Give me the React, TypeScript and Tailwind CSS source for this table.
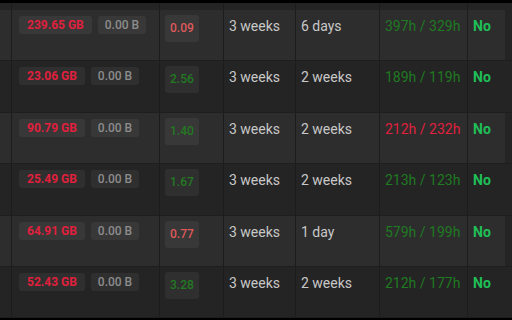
type Row = {
  size: string;
  ratio: string;
  ratioGood: boolean;
  added: string;
  seen: string;
  hours: string;
  hoursGood: boolean;
};

const rows: Row[] = [
  { size: "239.65 GB", ratio: "0.09", ratioGood: false, added: "3 weeks", seen: "6 days", hours: "397h / 329h", hoursGood: true },
  { size: "23.06 GB", ratio: "2.56", ratioGood: true, added: "3 weeks", seen: "2 weeks", hours: "189h / 119h", hoursGood: true },
  { size: "90.79 GB", ratio: "1.40", ratioGood: true, added: "3 weeks", seen: "2 weeks", hours: "212h / 232h", hoursGood: false },
  { size: "25.49 GB", ratio: "1.67", ratioGood: true, added: "3 weeks", seen: "2 weeks", hours: "213h / 123h", hoursGood: true },
  { size: "64.91 GB", ratio: "0.77", ratioGood: false, added: "3 weeks", seen: "1 day", hours: "579h / 199h", hoursGood: true },
  { size: "52.43 GB", ratio: "3.28", ratioGood: true, added: "3 weeks", seen: "2 weeks", hours: "212h / 177h", hoursGood: true },
];

const cols = "grid grid-cols-[12px_148px_64px_72px_84px_88px_37px_1fr]";
const cell = "border-r border-[#1c1c1c]";

const TableRow = ({ row, odd }: { row: Row; odd: boolean }) => (
  <div className={`${cols} h-[51.4px] shrink-0 border-b border-[#1e1e1e]`}>
    <div className={`${cell} ${odd ? "bg-[#2d2d2d]" : "bg-[#242424]"}`} />
    <div className={`${cell} flex items-start gap-[6px] pl-[7px] pt-[6px] ${odd ? "bg-[#2d2d2d]" : "bg-[#242424]"}`}>
      <span className="rounded-[3px] bg-white/[0.05] px-[8px] text-[12px] leading-[18px] font-bold text-[#e0203d]">
        {row.size}
      </span>
      <span className="rounded-[3px] bg-white/[0.05] px-[7px] text-[12px] leading-[18px] font-medium text-[#8c8c8c]">
        0.00 B
      </span>
    </div>
    <div className={`${cell} pl-[5px] pt-[5px] ${odd ? "bg-[#2d2d2d]" : "bg-[#242424]"}`}>
      <span
        className={`inline-block rounded-[3px] bg-white/[0.05] px-[5px] py-[5px] text-[12px] leading-[17px] font-medium ${
          row.ratioGood ? "text-[#237a23]" : "text-[#de5a5a]"
        }`}
      >
        {row.ratio}
      </span>
    </div>
    <div className={`${cell} px-[5px] pt-[6px] text-[14px] leading-5 text-[#c8c8c8] ${odd ? "bg-[#2d2d2d]" : "bg-[#242424]"}`}>
      {row.added}
    </div>
    <div className={`${cell} px-[5px] pt-[6px] text-[14px] leading-5 text-[#c8c8c8] ${odd ? "bg-[#2d2d2d]" : "bg-[#242424]"}`}>
      {row.seen}
    </div>
    <div
      className={`${cell} px-[5px] pt-[6px] text-[14px] leading-5 whitespace-nowrap ${
        row.hoursGood ? "text-[#1f7a22]" : "text-[#e0203d]"
      } ${odd ? "bg-[#2d2d2d]" : "bg-[#242424]"}`}
    >
      {row.hours}
    </div>
    <div className={`px-[5px] pt-[6px] text-[14px] leading-5 font-bold text-[#1fbf57] ${odd ? "bg-[#2d2d2d]" : "bg-[#242424]"}`}>
      No
    </div>
    <div className="bg-[#242424]" />
  </div>
);

export default function App() {
  return (
    <div className="flex h-[320px] w-[512px] flex-col overflow-hidden bg-black font-['Roboto',sans-serif]">
      <div className="h-[3px] shrink-0 bg-black" />
      <div className={`${cols} h-[7px] shrink-0 bg-[#242424]`}>
        <div className={cell} />
        <div className={cell} />
        <div className={cell} />
        <div className={cell} />
        <div className={cell} />
        <div className={cell} />
        <div />
        <div />
      </div>
      {rows.map((row, i) => (
        <TableRow key={i} row={row} odd={i % 2 === 0} />
      ))}
    </div>
  );
}
